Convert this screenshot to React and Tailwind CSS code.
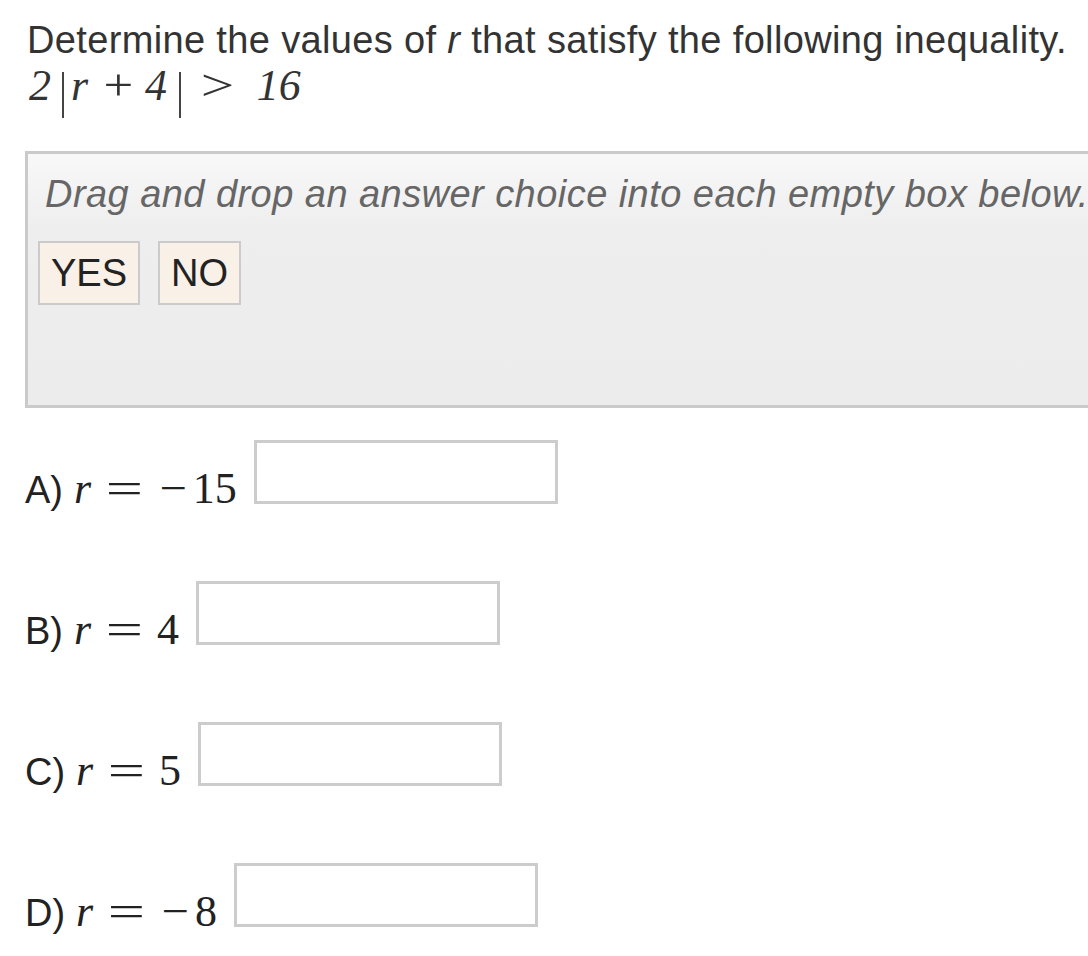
import React from 'react';

const sans = { fontFamily: '"Liberation Sans", Arial, sans-serif' };
const serif = { fontFamily: '"Liberation Serif", "Times New Roman", serif' };

const rows = [
    { label: 'A)', neg: true, num: '15' },
    { label: 'B)', num: '4' },
    { label: 'C)', num: '5' },
    { label: 'D)', neg: true, num: '8' },
];

const Tile = ({ children }) => (
    <div className="h-[64px] px-[11px] flex items-center border-2 border-[#cbcbcb] bg-[#f9f0e7] text-[38px] text-[#222]">
        {children}
    </div>
);

// stretchy absolute-value bar
const Bar = ({ className = '' }) => (
    <span className={`self-start mt-[10px] inline-block w-[2px] h-[46px] bg-[#444] ${className}`} />
);

const M = ({ children, className = '' }) => (
    <span style={serif} className={`text-[44px] ${className}`}>{children}</span>
);

const AnswerRow = ({ label, neg, num }) => (
    <div className="flex items-end">
        <div className="flex items-baseline text-[#222] leading-[44px] mb-[-8px]">
            <span style={sans} className="text-[38px]">{label}</span>
            <M className="italic ml-[11px]">r</M>
            <M className="ml-[21px] inline-block scale-x-[1.5]">=</M>
            {neg && <M className="ml-[24px] inline-block scale-x-[1.1]">{'\u2212'}</M>}
            <M className={neg ? 'ml-[7px]' : 'ml-[20px]'}>{num}</M>
        </div>
        <div className="w-[304px] h-[64px] border-[3px] border-[#cccccc] bg-white ml-[17px]" />
    </div>
);

export default function App() {
    return (
        <div className="w-full min-h-[956px] bg-white overflow-hidden" style={sans}>
            <div className="pl-[27px] pt-[18px]">
                <p className="text-[38px] leading-[44px] tracking-[0.35px] text-[#333]">
                    Determine the values of <i>r</i> that satisfy the following inequality.
                </p>
                <div className="text-[#333] leading-[48px] flex items-baseline h-[48px] pl-[2px]">
                    <M className="italic">2</M>
                    <Bar className="ml-[11px]" />
                    <M className="italic ml-[7px]">r</M>
                    <M className="ml-[18px] inline-block scale-x-[1.2]">+</M>
                    <M className="italic ml-[14px]">4</M>
                    <Bar className="ml-[12px]" />
                    <M className="ml-[24px] inline-block scale-x-[1.35]">&gt;</M>
                    <M className="italic ml-[27px]">16</M>
                </div>
            </div>

            <div className="ml-[25px] mt-[41px] w-[1100px] h-[257px] border-[3px] border-[#cacaca] bg-gradient-to-b from-[#f8f8f8] via-[#eeeeee] via-[30%] to-[#ececec] pl-[10px]">
                <p className="italic text-[38px] leading-[44px] tracking-[0.45px] text-[#666] pl-[7px] pt-[18px]">
                    Drag and drop an answer choice into each empty box below.
                </p>
                <div className="flex gap-[18px] mt-[25px]">
                    <Tile>YES</Tile>
                    <Tile>NO</Tile>
                </div>
            </div>

            <div className="pl-[25px] mt-[32px] flex flex-col gap-[77px]">
                {rows.map((row) => (
                    <AnswerRow key={row.label} {...row} />
                ))}
            </div>
        </div>
    );
}
